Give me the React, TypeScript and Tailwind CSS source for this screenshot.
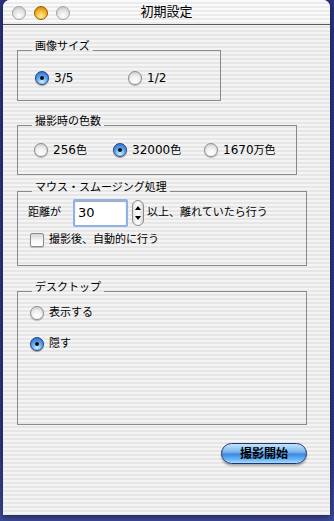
import React from "react";

const stripes =
  "bg-[image:repeating-linear-gradient(180deg,#f4f4f4_0px,#f4f4f4_2px,#e6e6e6_2px,#e6e6e6_4px)]";

function Radio({ on }: { on?: boolean }) {
  if (on) {
    return (
      <span className="flex h-[14px] w-[14px] shrink-0 items-center justify-center rounded-full border border-[#22427f] bg-[radial-gradient(circle_at_50%_80%,#d0f0ff_0%,#62a8f0_45%,#1f5fc4_100%)] shadow-[0_1px_1px_rgba(0,0,0,0.35)]">
        <span className="h-[4px] w-[4px] rounded-full bg-[#101010]" />
      </span>
    );
  }
  return (
    <span className="h-[14px] w-[14px] shrink-0 rounded-full border border-[#8c8c8c] bg-[radial-gradient(circle_at_50%_80%,#ffffff_0%,#f2f2f2_45%,#c4c4c4_100%)] shadow-[0_1px_1px_rgba(0,0,0,0.25)]" />
  );
}

function Option({ on, label, width }: { on?: boolean; label: React.ReactNode; width?: string }) {
  return (
    <div className={`flex h-[14px] items-center ${width ?? ""}`}>
      <Radio on={on} />
      <span className="ml-[5px] leading-[14px]">{label}</span>
    </div>
  );
}

function Num({ children }: { children: React.ReactNode }) {
  return <span className="font-['DejaVu_Sans',sans-serif] text-[12px]">{children}</span>;
}

function Group({ title, width, children }: { title: string; width: string; children: React.ReactNode }) {
  return (
    <fieldset className={`border border-[#8a8a8a] ${width}`}>
      <legend className="ml-[14px] px-[3px] pb-[7px] leading-[13px]">{title}</legend>
      {children}
    </fieldset>
  );
}

export default function App() {
  return (
    <div className="h-[521px] w-[334px] overflow-hidden bg-[linear-gradient(180deg,#2c3480_0%,#2f3884_85%,#3c4a98_100%)] font-['Lucida_Grande','DejaVu_Sans','Noto_Sans_CJK_JP',sans-serif] text-[11px] text-black">
      <div className={`ml-[3px] flex h-[515px] w-[327px] flex-col rounded-t-[7px] ${stripes} shadow-[0_2px_6px_rgba(0,0,0,0.5)]`}>
        {/* title bar */}
        <div className="relative flex h-[25px] shrink-0 items-center justify-center rounded-t-[7px] border-b border-[#5a5a5a] bg-[image:repeating-linear-gradient(180deg,#fafafa_0px,#fafafa_2px,#ebebeb_2px,#ebebeb_4px)]">
          <div className="absolute left-[9px] top-[6px] flex gap-[8px]">
            <span className="h-[14px] w-[14px] rounded-full border border-[#a2a2a2] bg-[radial-gradient(circle_at_50%_75%,#ffffff_0%,#e4e4e4_50%,#bdbdbd_100%)]" />
            <span className="h-[14px] w-[14px] rounded-full border border-[#9a5a00] bg-[radial-gradient(circle_at_50%_75%,#fff1a0_0%,#f7b52a_50%,#c27400_100%)]" />
            <span className="h-[14px] w-[14px] rounded-full border border-[#a2a2a2] bg-[radial-gradient(circle_at_50%_75%,#ffffff_0%,#e4e4e4_50%,#bdbdbd_100%)]" />
          </div>
          <span className="text-[13px] leading-[16px]">初期設定</span>
        </div>

        <div className="flex flex-col pl-[14px]">
          <div className="mt-[15px]">
            <Group title="画像サイズ" width="w-[204px]">
              <div className="flex h-[40px] items-center pb-[4px] pl-[17px]">
                <Option on label={<Num>3/5</Num>} width="w-[93px]" />
                <Option label={<Num>1/2</Num>} />
              </div>
            </Group>
          </div>

          <div className="mt-[14px]">
            <Group title="撮影時の色数" width="w-[280px]">
              <div className="flex h-[39px] items-center pb-[9px] pl-[16px]">
                <Option label={<><Num>256</Num>色</>} width="w-[79px]" />
                <Option on label={<><Num>32000</Num>色</>} width="w-[91px]" />
                <Option label={<><Num>1670</Num>万色</>} />
              </div>
            </Group>
          </div>

          <div className="mt-[6px]">
            <Group title="マウス・スムージング処理" width="w-[290px]">
              <div className="flex h-[64px] flex-col pl-[10px]">
                <div className="-mt-[2px] flex h-[28px] items-center">
                  <span className="w-[45px]">距離が</span>
                  <div className="flex h-[28px] w-[55px] items-center rounded-[2px] border-[2px] border-[#8fb2e6] bg-white pl-[3px] shadow-[inset_0_1px_1px_rgba(0,0,0,0.35)]">
                    <span className="font-['DejaVu_Sans',sans-serif] text-[13px]">30</span>
                  </div>
                  <div className="ml-[4px] flex h-[26px] w-[12px] flex-col items-center justify-between rounded-full border border-[#8a8a8a] bg-[linear-gradient(90deg,#e2e2e2_0%,#ffffff_50%,#dadada_100%)] py-[5px]">
                    <span className="h-0 w-0 border-x-[3px] border-b-[4px] border-x-transparent border-b-black" />
                    <span className="h-0 w-0 border-x-[3px] border-t-[4px] border-x-transparent border-t-black" />
                  </div>
                  <span className="ml-[3px]">以上、離れていたら行う</span>
                </div>
                <div className="mt-[6px] flex h-[14px] items-center pl-[2px]">
                  <span className="h-[14px] w-[14px] shrink-0 rounded-[2px] border border-[#8c8c8c] bg-[linear-gradient(180deg,#d4d4d4_0%,#f6f6f6_50%,#ffffff_100%)] shadow-[0_1px_1px_rgba(0,0,0,0.2)]" />
                  <span className="ml-[5px]">撮影後、自動的に行う</span>
                </div>
              </div>
            </Group>
          </div>

          <div className="mt-[15px]">
            <Group title="デスクトップ" width="w-[290px]">
              <div className="flex h-[123px] flex-col pl-[12px] pt-[5px]">
                <Option label="表示する" />
                <div className="mt-[17px]">
                  <Option on label="隠す" />
                </div>
              </div>
            </Group>
          </div>

          <div className="mt-[18px] flex w-[290px] justify-end">
            <button className="flex h-[21px] w-[86px] items-center justify-center rounded-full border border-[#1d3670] bg-[linear-gradient(180deg,#c6e4fc_0%,#7db8ee_40%,#3f8ae0_55%,#66b2f4_80%,#a8dcff_100%)] text-[12px] font-semibold leading-none shadow-[0_2px_2px_rgba(0,0,0,0.3)]">
              撮影開始
            </button>
          </div>
        </div>
      </div>
    </div>
  );
}
